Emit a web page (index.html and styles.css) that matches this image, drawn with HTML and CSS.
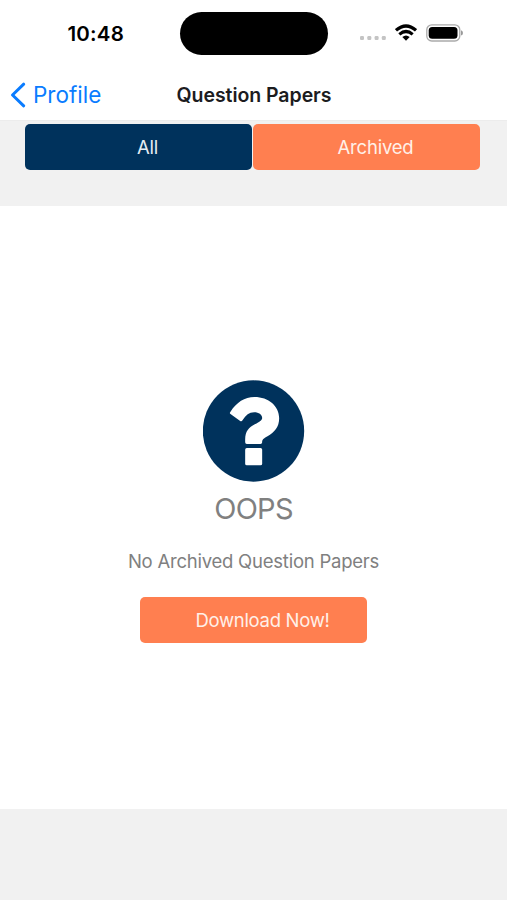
FILE: index.html
```html
<!DOCTYPE html>
<html lang="en">
<head>
<meta charset="utf-8">
<title>Question Papers</title>
<link rel="stylesheet" href="styles.css">
</head>
<body>
<div class="screen">
  <header class="header">
    <div class="status">
      <span class="time">10:48</span>
      <div class="island"></div>
      <div class="indicators">
        <svg class="signal" width="26" height="4" viewBox="0 0 26 4"><g fill="#c4c4c4"><rect width="4" height="4" rx="1.2"/><rect x="7.3" width="4" height="4" rx="1.2"/><rect x="14.6" width="4" height="4" rx="1.2"/><rect x="21.8" width="4" height="4" rx="1.2"/></g></svg>
        <svg class="wifi" width="22" height="17" viewBox="0 0 66 51"><g fill="none" stroke="#000" stroke-width="9.5"><path d="M3 19Q33-7 63 19"/><path d="M13 31Q33 14 53 31"/></g><path d="M22 39Q33 30 44 39L33 50Z"/></svg>
        <svg class="battery" width="37" height="18" viewBox="0 0 37 18"><rect x=".8" y=".8" width="33" height="16.2" rx="5" fill="#fff" stroke="#aaa" stroke-width="1.3"/><rect x="2.7" y="2.9" width="28.8" height="11.9" rx="3.5"/><path d="M35 6.2Q37 7 37 9T35 11.5Z" fill="#999"/></svg>
      </div>
    </div>
    <nav class="nav">
      <a class="back"><svg width="16" height="26" viewBox="0 0 16 26"><path d="M13.7 2.2 2.5 13l11.2 10.8" fill="none" stroke="#0a7cff" stroke-width="3" stroke-linecap="round" stroke-linejoin="round"/></svg><span class="back-label">Profile</span></a>
      <h1 class="title">Question Papers</h1>
    </nav>
  </header>
  <div class="tabs">
    <button class="button navy"><span class="all">All</span></button>
    <button class="button orange"><span class="archived">Archived</span></button>
  </div>
  <main class="empty">
    <svg class="question" width="102" height="102" viewBox="38.5 30 306 306"><circle cx="190" cy="183" r="152" fill="#00325c"/><path fill="#fff" d="M121 125C139 97 163 81 193 81C235 81 267 108 267 145C267 171 253 187 232 199C220 206 216 209 216 217Q216 222 211 222H170Q165 222 165 217V208C165 184 176 173 194 163C209 155 216 151 216 144C216 134 206 127 192 127C176 127 168 135 157 151Q154 156 149 152L121 132Q117 129 121 125Z"/><rect x="165" y="234" width="51" height="52" rx="5" fill="#fff"/></svg>
    <h2 class="oops">OOPS</h2>
    <p class="message">No Archived Question Papers</p>
    <button class="button orange"><span class="download">Download Now!</span></button>
  </main>
</div>
</body>
</html>
```
FILE: styles.css
```css
* { box-sizing: border-box; }
body { margin: 0; background: #f1f1f1; font-family: Inter, "Liberation Sans", sans-serif; }
.screen { width: 507px; height: 900px; }
.header { height: 121px; background: #fff; border-bottom: 1px solid #ececec; }
.status { display: grid; grid-template-columns: 180px 148px 179px; height: 69px; padding-top: 12px; }
.time { padding-left: 67.5px; font-size: 20.5px; font-weight: 600; line-height: 43px; letter-spacing: .2px; }
.island { height: 43px; border-radius: 22px; background: #000; }
.indicators { display: flex; align-items: flex-start; padding-left: 32px; }
.signal { margin-top: 24px; }
.wifi { margin: 12px 0 0 9px; }
.battery { margin: 12px 0 0 9px; }
.nav { display: grid; grid-template-columns: 176.5px 1fr; height: 52px; align-items: center; }
.back { display: flex; align-items: center; gap: 7px; padding-left: 10px; color: #0a7cff; }
.back-label { font-size: 22.5px; line-height: 30px; letter-spacing: 0; }
.title { margin: 0; font-size: 19.5px; font-weight: 600; line-height: 30px; letter-spacing: -.05px; color: #1c1c1e; white-space: nowrap; }
.tabs { display: flex; gap: 1px; height: 85px; padding: 3px 0 0 25px; }
.button { width: 227px; height: 46px; padding: 0 0 0 18px; border: 0; border-radius: 5px; font: 400 18.5px/44px Inter, sans-serif; letter-spacing: -.2px; color: #fff0e8; text-align: center; white-space: nowrap; }
.navy { background: #00325c; color: #e5edf3; }
.orange { background: #ff7f50; }
.empty { display: flex; flex-direction: column; align-items: center; height: 603px; padding-top: 174px; background: #fff; color: #808080; }
.question { display: block; }
.oops { margin: 9px 0 0; font-size: 29px; font-weight: 400; line-height: 36px; letter-spacing: -.7px; }
.message { margin: 22px 0 24px; font-size: 18.5px; line-height: 24px; letter-spacing: -.23px; white-space: nowrap; }
.empty .button { margin: 0; flex: none; letter-spacing: -.3px; }
```
